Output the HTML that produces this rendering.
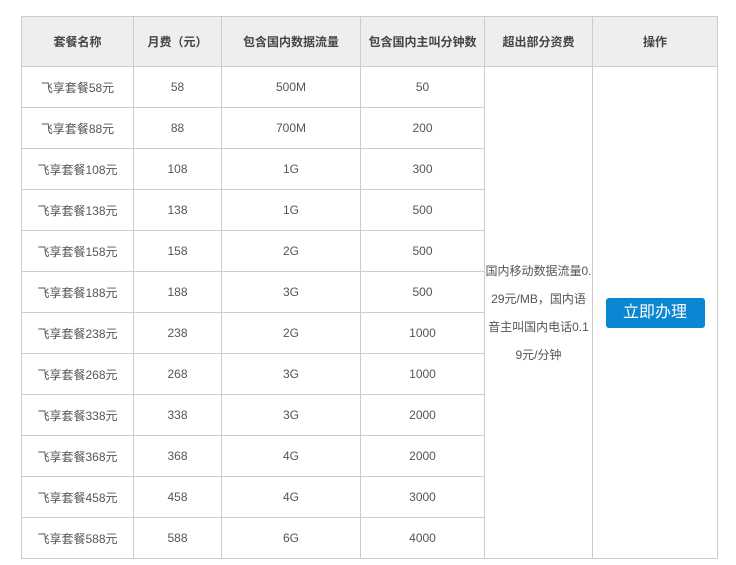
<!DOCTYPE html>
<html><head><meta charset="utf-8"><style>
body{margin:0;background:#fff;font-family:"Liberation Sans","Noto Sans CJK SC",sans-serif;}
table{position:absolute;left:21px;top:16px;border-collapse:collapse;table-layout:fixed;width:697px;}
td,th{border:1px solid #cccccc;text-align:center;font-size:12px;color:#555;padding:0;}
th{background:#eeeeee;height:49px;font-weight:bold;color:#444;}
td{height:40px;}
.note{line-height:28px;font-size:12px;color:#555;padding-top:0px;}
.btn{display:inline-block;width:99px;height:30px;line-height:30px;background:#0a86d2;color:#fff;font-size:16px;border-radius:3px;}
</style></head><body>
<table>
<colgroup><col style="width:112px"><col style="width:88px"><col style="width:139px"><col style="width:124px"><col style="width:108px"><col style="width:125px"></colgroup>
<tr><th>套餐名称</th><th>月费（元）</th><th>包含国内数据流量</th><th>包含国内主叫分钟数</th><th>超出部分资费</th><th>操作</th></tr>
<tr><td>飞享套餐58元</td><td>58</td><td>500M</td><td>50</td>
<td rowspan="12"><div class="note">国内移动数据流量0.<br>29元/MB，国内语<br>音主叫国内电话0.1<br>9元/分钟</div></td>
<td rowspan="12"><span class="btn">立即办理</span></td></tr>
<tr><td>飞享套餐88元</td><td>88</td><td>700M</td><td>200</td></tr>
<tr><td>飞享套餐108元</td><td>108</td><td>1G</td><td>300</td></tr>
<tr><td>飞享套餐138元</td><td>138</td><td>1G</td><td>500</td></tr>
<tr><td>飞享套餐158元</td><td>158</td><td>2G</td><td>500</td></tr>
<tr><td>飞享套餐188元</td><td>188</td><td>3G</td><td>500</td></tr>
<tr><td>飞享套餐238元</td><td>238</td><td>2G</td><td>1000</td></tr>
<tr><td>飞享套餐268元</td><td>268</td><td>3G</td><td>1000</td></tr>
<tr><td>飞享套餐338元</td><td>338</td><td>3G</td><td>2000</td></tr>
<tr><td>飞享套餐368元</td><td>368</td><td>4G</td><td>2000</td></tr>
<tr><td>飞享套餐458元</td><td>458</td><td>4G</td><td>3000</td></tr>
<tr><td>飞享套餐588元</td><td>588</td><td>6G</td><td>4000</td></tr>
</table>
</body></html>
